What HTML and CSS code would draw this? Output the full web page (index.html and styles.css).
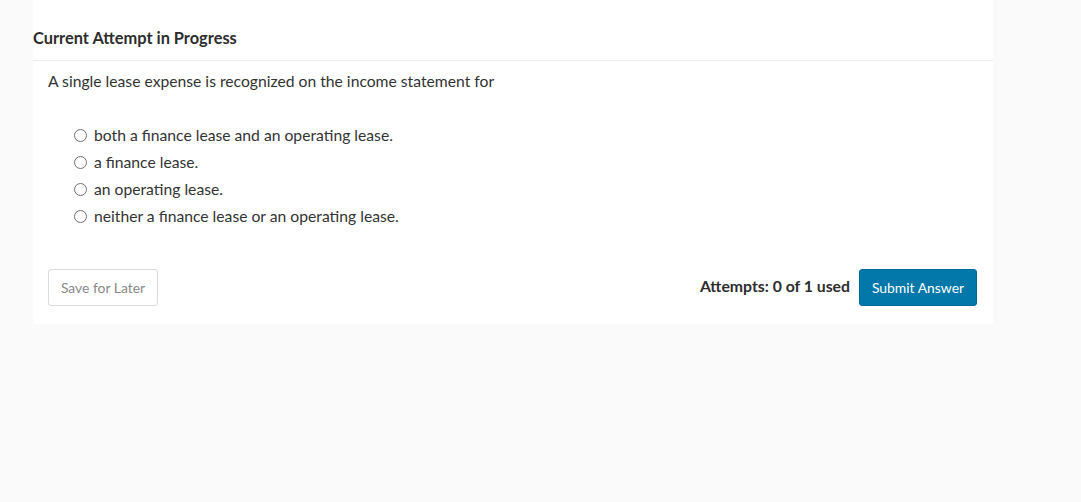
FILE: index.html
```html
<!DOCTYPE html>
<html lang="en">
<head>
    <meta charset="UTF-8">
    <title>Current Attempt in Progress</title>
    <link rel="stylesheet" href="styles.css">
</head>
<body>
    <div class="card">
        <div class="card-header">Current Attempt in Progress</div>
        <div class="question">
            <p class="prompt">A single lease expense is recognized on the income statement for</p>
            <ul class="options">
                <li><label><input type="radio" name="answer"> both a finance lease and an operating lease.</label></li>
                <li><label><input type="radio" name="answer"> a finance lease.</label></li>
                <li><label><input type="radio" name="answer"> an operating lease.</label></li>
                <li><label><input type="radio" name="answer"> neither a finance lease or an operating lease.</label></li>
            </ul>
        </div>
        <div class="card-footer">
            <button class="btn btn-save">Save for Later</button>
            <div class="submit-group">
                <span class="attempts">Attempts: 0 of 1 used</span>
                <button class="btn btn-submit">Submit Answer</button>
            </div>
        </div>
    </div>
</body>
</html>
```

FILE: styles.css
```css
body {
    margin: 0;
    background: #fafafa;
    font-family: Lato, "Open Sans", sans-serif;
    color: #333;
}
.card {
    margin-left: 33px;
    width: 960px;
    background: #fff;
    padding-bottom: 18px;
}
.card-header {
    padding: 29px 0 13px;
    font-size: 16.4px;
    line-height: 18px;
    font-weight: bold;
    color: #2d2d2d;
    border-bottom: 1px solid #ececec;
}
.question {
    padding: 10px 15px 0;
}
.prompt {
    margin: 0;
    font-size: 15.7px;
    line-height: 20px;
}
.options {
    list-style: none;
    margin: 31px 0 0 26px;
    padding: 0;
}
.options li {
    font-size: 15.7px;
    line-height: 27px;
}
.options label {
    display: flex;
    align-items: center;
}
.options input {
    -webkit-appearance: none;
    appearance: none;
    width: 13px;
    height: 13px;
    margin: 0 7px 0 0;
    border: 1px solid #707070;
    border-radius: 50%;
    background: #fff;
}
.card-footer {
    display: flex;
    justify-content: space-between;
    align-items: center;
    margin-top: 39px;
    padding: 0 16px 0 15px;
}
.submit-group {
    display: flex;
    align-items: center;
}
.btn {
    height: 37px;
    border-radius: 3px;
    font-family: Lato, "Open Sans", sans-serif;
    font-size: 13.9px;
    cursor: pointer;
}
.btn-save {
    width: 110px;
    background: #fff;
    border: 1px solid #dcdcdc;
    color: #888;
}
.attempts {
    font-size: 15.8px;
    font-weight: bold;
    color: #2d2d2d;
    margin-right: 9px;
    margin-top: -4px;
}
.btn-submit {
    width: 118px;
    background: #0177aa;
    border: 1px solid #016a98;
    color: #fff;
}
```
